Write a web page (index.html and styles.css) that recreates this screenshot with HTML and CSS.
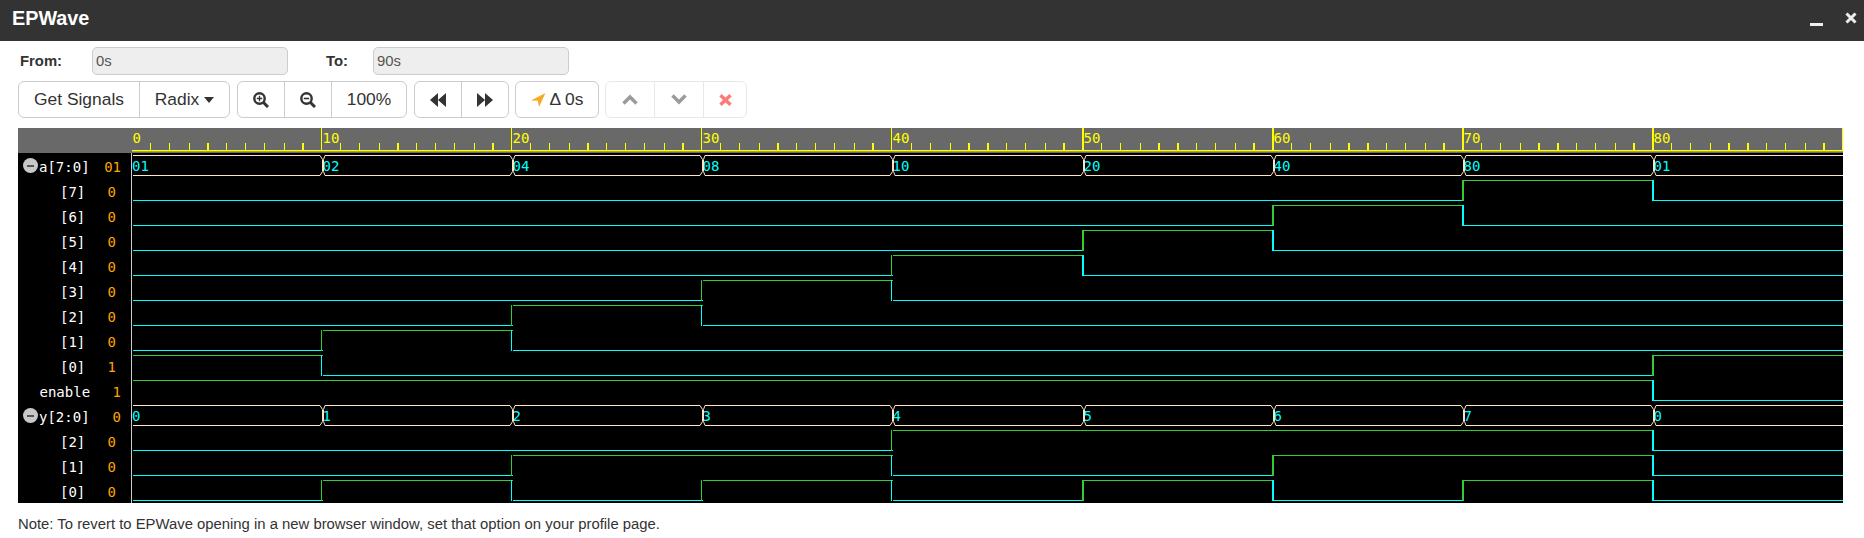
FILE: index.html
```html
<!DOCTYPE html>
<html lang="en">
<head>
    <meta charset="UTF-8">
    <title>EPWave</title>
    <link rel="stylesheet" href="styles.css">
</head>
<body>
    <div class="titlebar">
        <span class="title">EPWave</span>
        <svg class="win-min" width="13" height="3" viewBox="0 0 13 3"><rect width="13" height="3" fill="#eee"/></svg>
        <svg class="win-close" width="12" height="12" viewBox="0 0 12 12"><path d="M1.5 1.5L10.5 10.5M10.5 1.5L1.5 10.5" stroke="#eee" stroke-width="3"/></svg>
    </div>

    <form class="range">
        <label class="range-label from-label">From:</label>
        <input class="range-input" type="text" value="0s" disabled>
        <label class="range-label to-label">To:</label>
        <input class="range-input" type="text" value="90s" disabled>
    </form>

    <div class="toolbar">
        <div class="btn-group">
            <button class="btn btn-signals">Get Signals</button>
            <button class="btn btn-radix">Radix <span class="caret"></span></button>
        </div>
        <div class="btn-group">
            <button class="btn btn-icon">
                <svg width="16" height="16" viewBox="0 0 16 16"><circle cx="6.5" cy="6.5" r="5.2" fill="none" stroke="#333" stroke-width="2.4"/><path d="M10.5 10.5L15 15" stroke="#333" stroke-width="3"/><path d="M3.8 6.5H9.2M6.5 3.8V9.2" stroke="#333" stroke-width="1.3"/></svg>
            </button>
            <button class="btn btn-icon2">
                <svg width="16" height="16" viewBox="0 0 16 16"><circle cx="6.5" cy="6.5" r="5.2" fill="none" stroke="#333" stroke-width="2.4"/><path d="M10.5 10.5L15 15" stroke="#333" stroke-width="3"/><path d="M3.8 6.5H9.2" stroke="#333" stroke-width="1.6"/></svg>
            </button>
            <button class="btn btn-zoom">100%</button>
        </div>
        <div class="btn-group">
            <button class="btn btn-icon">
                <svg width="16" height="14" viewBox="0 0 16 14"><path d="M8 0V14L0 7ZM16 0V14L8 7Z" fill="#333"/></svg>
            </button>
            <button class="btn btn-icon2">
                <svg width="16" height="14" viewBox="0 0 16 14"><path d="M0 0V14L8 7ZM8 0V14L16 7Z" fill="#333"/></svg>
            </button>
        </div>
        <div class="btn-group delta-group">
            <button class="btn btn-delta">
                <svg width="15" height="14" viewBox="0 0 15 14"><path d="M14.5 0L8 14L6.8 7.8L0 7.4Z" fill="#f9a825"/></svg>
                <span>&Delta; 0s</span>
            </button>
        </div>
        <div class="btn-group disabled">
            <button class="btn btn-prev">
                <svg width="16" height="11" viewBox="0 0 16 11"><path d="M1.5 9.5L8 3L14.5 9.5" fill="none" stroke="#666" stroke-width="3.4"/></svg>
            </button>
            <button class="btn btn-next">
                <svg width="16" height="11" viewBox="0 0 16 11"><path d="M1.5 1.5L8 8L14.5 1.5" fill="none" stroke="#666" stroke-width="3.4"/></svg>
            </button>
            <button class="btn btn-clear">
                <svg width="13" height="12" viewBox="0 0 13 12"><path d="M1.5 1.2L11.5 10.8M11.5 1.2L1.5 10.8" stroke="#f33" stroke-width="3.4"/></svg>
            </button>
        </div>
    </div>

    <div class="wave">
        <div class="names">
            <div class="names-head"></div>
            <div class="rows">
                <div class="row top"><span class="toggle"></span><span class="name">a[7:0]</span><span class="val">01</span></div>
                <div class="row bit"><span class="name">[7]</span><span class="val">0</span></div>
                <div class="row bit"><span class="name">[6]</span><span class="val">0</span></div>
                <div class="row bit"><span class="name">[5]</span><span class="val">0</span></div>
                <div class="row bit"><span class="name">[4]</span><span class="val">0</span></div>
                <div class="row bit"><span class="name">[3]</span><span class="val">0</span></div>
                <div class="row bit"><span class="name">[2]</span><span class="val">0</span></div>
                <div class="row bit"><span class="name">[1]</span><span class="val">0</span></div>
                <div class="row bit"><span class="name">[0]</span><span class="val">1</span></div>
                <div class="row plain"><span class="name">enable</span><span class="val">1</span></div>
                <div class="row top"><span class="toggle"></span><span class="name">y[2:0]</span><span class="val">0</span></div>
                <div class="row bit"><span class="name">[2]</span><span class="val">0</span></div>
                <div class="row bit"><span class="name">[1]</span><span class="val">0</span></div>
                <div class="row bit"><span class="name">[0]</span><span class="val">0</span></div>
            </div>
        </div>
        <svg id="plot" class="plot" width="1712" height="375" viewBox="131 128 1712 375"></svg>
    </div>

    <p class="note">Note: To revert to EPWave opening in a new browser window, set that option on your profile page.</p>

    <script src="wave.js"></script>
</body>
</html>
```

FILE: styles.css
```css
body {
    margin: 0;
    background-color: #fff;
    color: #333;
    font-family: "Liberation Sans", Arial, sans-serif;
    font-size: 14.85px;
    overflow: hidden;
}

.titlebar {
    height: 41px;
    background-color: #333;
    color: #fff;
    display: flex;
    align-items: flex-start;
    padding-left: 12px;
    padding-right: 7px;
}

.title {
    font-size: 19.8px;
    font-weight: bold;
    line-height: 36px;
}

.win-min {
    margin-left: auto;
    margin-top: 23px;
}

.win-close {
    margin-left: 22px;
    margin-top: 12px;
}

.range {
    display: flex;
    align-items: center;
    margin: 6px 0 6px 20px;
    height: 28px;
}

.range-label {
    font-weight: bold;
}

.from-label {
    width: 72px;
}

.to-label {
    width: 47px;
    margin-left: 38px;
}

.range-input {
    box-sizing: border-box;
    width: 196px;
    height: 28px;
    padding: 0 3px;
    border: 1px solid #ccc;
    border-radius: 5px;
    background-color: #eee;
    color: #555;
    font-family: "Liberation Sans", Arial, sans-serif;
    font-size: 14.85px;
}

.toolbar {
    display: flex;
    gap: 7px;
    margin-left: 18px;
    height: 37px;
}

.btn-group {
    display: flex;
    border: 1px solid #ccc;
    border-radius: 6px;
    box-sizing: border-box;
    height: 37px;
}

.btn-group.disabled {
    opacity: 0.65;
    border-color: #ddd;
    margin-left: -1px;
}

.delta-group {
    margin-left: -1px;
}

.btn {
    display: flex;
    align-items: center;
    justify-content: center;
    box-sizing: border-box;
    height: 35px;
    padding: 0;
    border: none;
    border-left: 1px solid #ccc;
    background: none;
    color: #333;
    font-family: "Liberation Sans", Arial, sans-serif;
    font-size: 17.4px;
}

.btn:first-child {
    border-left: none;
}

.disabled .btn {
    border-left-color: #ddd;
}

.btn-signals { width: 120px; }
.btn-radix { width: 90px; gap: 5px; }
.btn-icon { width: 46px; }
.btn-icon2 { width: 47px; }
.btn-zoom { width: 75px; }
.btn-delta { width: 82px; gap: 4px; }
.btn-prev { width: 48px; }
.btn-next { width: 49px; }
.btn-clear { width: 43px; }

.caret {
    width: 0;
    height: 0;
    border-top: 6px solid #333;
    border-left: 5px solid transparent;
    border-right: 5px solid transparent;
}

.wave {
    display: flex;
    width: 1825px;
    height: 375px;
    margin: 10px 0 0 18px;
    background-color: #000;
    overflow: hidden;
}

.names {
    width: 113px;
    font-family: "DejaVu Sans Mono", monospace;
    font-size: 14px;
}

.names-head {
    height: 25px;
    background-color: #696969;
}

.rows {
    padding-top: 2px;
}

.row {
    display: flex;
    height: 25px;
    line-height: 25px;
    color: #fff;
}

.row.top {
    padding-left: 5px;
}

.row.bit {
    padding-left: 42px;
}

.row.plain {
    padding-left: 21.5px;
}

.toggle {
    position: relative;
    width: 15px;
    height: 15px;
    margin: 3px 1px 0 0;
    border-radius: 50%;
    background-color: #c8c8c8;
}

.toggle::after {
    content: "";
    position: absolute;
    left: 4px;
    top: 6.5px;
    width: 7px;
    height: 2px;
    background-color: #555;
}

.val {
    margin-left: auto;
    color: #ffa500;
    padding-right: 10px;
}

.row.bit .val {
    padding-right: 15px;
}

.plot {
    display: block;
    background-color: #000;
}

.tick-label {
    fill: #ff0;
    font: 14px "DejaVu Sans Mono", monospace;
}

.bus-label {
    fill: #0ff;
    font: 14px "DejaVu Sans Mono", monospace;
}

.note {
    margin: 11px 0 0 18px;
    line-height: 20px;
}
```

FILE: wave.js
```js
const svg = document.getElementById('plot');
const NS = 'http://www.w3.org/2000/svg';

const GREEN = '#32cd32';
const CYAN = '#0ff';
const BUS = '#ffe4c4';

// pixel column and width of each 10s mark, 0s to 90s
const marks = [[131, 1], [321, 1], [511, 1], [701, 1], [891, 1], [1082, 2], [1272, 2], [1462, 2], [1652, 2], [1842, 2]];
const minor = [19, 38, 58, 76, 95, 114, 133, 153, 171];

function add(tag, attrs, text) {
    const el = document.createElementNS(NS, tag);
    for (const k in attrs) el.setAttribute(k, attrs[k]);
    if (text !== undefined) el.textContent = text;
    svg.appendChild(el);
    return el;
}

function bar(x, y, w, h, color) {
    add('rect', { x: x, y: y, width: w, height: h, fill: color });
}

function drawRuler() {
    bar(131, 128, 1712, 25, '#696969');
    bar(132, 150, 1711, 1, '#ff0');
    bar(132, 151, 1711, 1, '#a8a83c');
    marks.forEach((m, k) => {
        if (k > 0) bar(m[0], 128, m[1], 23, '#ff0');
        if (k == 9) return;
        add('text', { x: m[0] + 1.5, y: 143, class: 'tick-label' }, k * 10);
        minor.forEach((off, j) => {
            const thick = j % 5 == 3 || (j == 4 && k >= 4);
            bar(m[0] + off + (k == 4 ? 1 : 0), 143, thick ? 2 : 1, 7, '#ff0');
        });
    });
}

function drawBit(row, levels) {
    const high = 155 + 25 * row;
    const low = high + 20;
    let start = 133;
    levels.forEach((level, i) => {
        const next = i < 8 ? marks[i + 1][0] + 2 : 1843;
        bar(start, level ? high : low, next - start, 1, level ? GREEN : CYAN);
        if (i < 8 && levels[i + 1] != level) {
            const m = marks[i + 1];
            bar(m[0], high, m[1], 21, level ? CYAN : GREEN);
        }
        start = next;
    });
}

function drawBus(row, values) {
    const top = 155 + 25 * row;
    const bot = top + 20;
    let d = '';
    let start = 133;
    values.forEach((v, i) => {
        const c = i < 8 ? marks[i + 1][0] + 2 : 1843;
        const end = i < 8 ? c - 3 : c;
        d += 'M' + start + ' ' + (top + 0.5) + 'H' + end;
        d += 'M' + start + ' ' + (bot + 0.5) + 'H' + end;
        if (i < 8) {
            d += 'M' + end + ' ' + (top + 0.5) + 'L' + (c - 0.5) + ' ' + (top + 4.5) + 'V' + (bot - 3.5) + 'L' + end + ' ' + (bot + 0.5);
            d += 'M' + (c + 2) + ' ' + (top + 0.5) + 'L' + (c + 0.5) + ' ' + (top + 4.5) + 'V' + (bot - 3.5) + 'L' + (c + 2) + ' ' + (bot + 0.5);
        }
        add('text', { x: i ? marks[i][0] + 1.5 : 132, y: top + 16, class: 'bus-label' }, v);
        start = c + 2;
    });
    add('path', { d: d, fill: 'none', stroke: BUS, 'stroke-width': 1 });
}

bar(131, 128, 1, 375, '#ccc');
drawRuler();

drawBus(0, ['01', '02', '04', '08', '10', '20', '40', '80', '01']);
drawBit(1, [0, 0, 0, 0, 0, 0, 0, 1, 0]);
drawBit(2, [0, 0, 0, 0, 0, 0, 1, 0, 0]);
drawBit(3, [0, 0, 0, 0, 0, 1, 0, 0, 0]);
drawBit(4, [0, 0, 0, 0, 1, 0, 0, 0, 0]);
drawBit(5, [0, 0, 0, 1, 0, 0, 0, 0, 0]);
drawBit(6, [0, 0, 1, 0, 0, 0, 0, 0, 0]);
drawBit(7, [0, 1, 0, 0, 0, 0, 0, 0, 0]);
drawBit(8, [1, 0, 0, 0, 0, 0, 0, 0, 1]);
drawBit(9, [1, 1, 1, 1, 1, 1, 1, 1, 0]);
drawBus(10, ['0', '1', '2', '3', '4', '5', '6', '7', '0']);
drawBit(11, [0, 0, 0, 0, 1, 1, 1, 1, 0]);
drawBit(12, [0, 0, 1, 1, 0, 0, 1, 1, 0]);
drawBit(13, [0, 1, 0, 1, 0, 1, 0, 1, 0]);
```
